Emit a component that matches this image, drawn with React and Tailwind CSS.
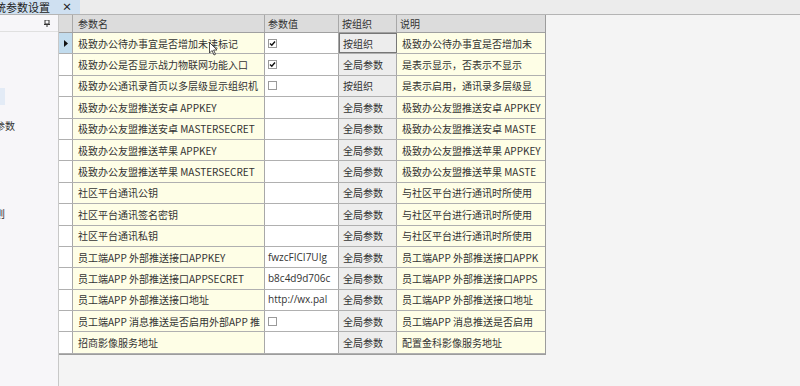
import React from "react";

const rows = [
  { name: "极致办公待办事宜是否增加未读标记", value: "check", org: "按组织", desc: "极致办公待办事宜是否增加未" },
  { name: "极致办公是否显示战力物联网功能入口", value: "check", org: "全局参数", desc: "是表示显示，否表示不显示" },
  { name: "极致办公通讯录首页以多层级显示组织机", value: "box", org: "按组织", desc: "是表示启用，通讯录多层级显" },
  { name: "极致办公友盟推送安卓 APPKEY", value: "", org: "全局参数", desc: "极致办公友盟推送安卓 APPKEY" },
  { name: "极致办公友盟推送安卓 MASTERSECRET", value: "", org: "全局参数", desc: "极致办公友盟推送安卓 MASTE" },
  { name: "极致办公友盟推送苹果 APPKEY", value: "", org: "全局参数", desc: "极致办公友盟推送苹果 APPKEY" },
  { name: "极致办公友盟推送苹果 MASTERSECRET", value: "", org: "全局参数", desc: "极致办公友盟推送苹果 MASTE" },
  { name: "社区平台通讯公钥", value: "", org: "全局参数", desc: "与社区平台进行通讯时所使用" },
  { name: "社区平台通讯签名密钥", value: "", org: "全局参数", desc: "与社区平台进行通讯时所使用" },
  { name: "社区平台通讯私钥", value: "", org: "全局参数", desc: "与社区平台进行通讯时所使用" },
  { name: "员工端APP 外部推送接口APPKEY", value: "fwzcFICI7UIg", org: "全局参数", desc: "员工端APP 外部推送接口APPK" },
  { name: "员工端APP 外部推送接口APPSECRET", value: "b8c4d9d706c", org: "全局参数", desc: "员工端APP 外部推送接口APPS" },
  { name: "员工端APP 外部推送接口地址", value: "http://wx.pal", org: "全局参数", desc: "员工端APP 外部推送接口地址" },
  { name: "员工端APP 消息推送是否启用外部APP 推", value: "box", org: "全局参数", desc: "员工端APP 消息推送是否启用" },
  { name: "招商影像服务地址", value: "", org: "全局参数", desc: "配置金科影像服务地址" },
];

const font = { fontFamily: '"Noto Sans CJK SC", "Liberation Sans", sans-serif' };

function Check({ checked }) {
  return (
    <span className="inline-flex h-[9px] w-[9px] items-center justify-center border border-[#9a9a9a] bg-white">
      {checked && (
        <svg width="7" height="7" viewBox="0 0 7 7">
          <path d="M1 3.5 L2.8 5.3 L6 1.5" stroke="#111" strokeWidth="1.4" fill="none" />
        </svg>
      )}
    </span>
  );
}

export default function App() {
  return (
    <div className="w-[800px] h-[386px] overflow-hidden bg-[#f4f4f4] text-[#333] relative" style={font}>
      {/* tab strip */}
      <div className="flex h-[15px] bg-[#ececec] border-b border-[#b4b4b4]">
        <div className="flex w-[80px] h-[14px] items-center bg-[#cfe0f1] text-[11px] leading-none text-[#222]">
          <span className="ml-[-5px]">统参数设置</span>
          <span className="ml-[12px] text-[10px] font-bold leading-none">×</span>
        </div>
      </div>

      <div className="flex h-[371px]">
        {/* left docked panel */}
        <div className="w-[59px] bg-[#f7f6f9] border-r border-[#c8c8c8] text-[10px] text-[#333]">
          <div className="flex h-[17px] items-center justify-end pr-[8px] border-b border-[#e0e0e0]">
            <svg width="6" height="7" viewBox="0 0 6 7">
              <rect x="1" y="0" width="4" height="4" fill="none" stroke="#333" strokeWidth="1" />
              <path d="M0 4.5 H6 M3 4.5 V7" stroke="#333" strokeWidth="1" />
            </svg>
          </div>
          <div className="mt-[56px] h-[17px] w-[5px] bg-[#e3ebf6]" />
          <div className="mt-[16px] ml-[-5px] leading-none">参数</div>
          <div className="mt-[78px] ml-[-5px] leading-none">则</div>
        </div>

        {/* grid */}
        <div className="flex-1">
          <div className="w-[487px] border-r border-b border-[#9c9c9c] text-[10px]">
            <div className="flex h-[18px] bg-[#dcdcdc] border-b border-[#a0a0a0]">
              <div className="w-[14px] border-r border-[#a8a8a8]" />
              <div className="w-[192px] border-r border-[#a8a8a8] pl-[5px] flex items-center">参数名</div>
              <div className="w-[74px] border-r border-[#a8a8a8] pl-[3px] flex items-center">参数值</div>
              <div className="w-[58px] border-r border-[#a8a8a8] pl-[3px] flex items-center">按组织</div>
              <div className="flex-1 pl-[3px] flex items-center">说明</div>
            </div>
            {rows.map((r, i) => (
              <div key={i} className="flex h-[21.4px] border-b border-[#b0b0b0]">
                <div className={`w-[14px] border-r border-[#a8a8a8] flex items-center justify-center ${i === 0 ? "bg-[#c2dcee]" : "bg-white"}`}>
                  {i === 0 && (
                    <svg width="4" height="7" viewBox="0 0 4 7">
                      <path d="M0 0 L4 3.5 L0 7 Z" fill="#111" />
                    </svg>
                  )}
                </div>
                <div className="w-[192px] border-r border-[#a8a8a8] bg-[#fefee6] pl-[5px] flex items-center whitespace-nowrap overflow-hidden">
                  {r.name}
                </div>
                <div className="w-[74px] border-r border-[#a8a8a8] bg-white pl-[3px] flex items-center whitespace-nowrap overflow-hidden" style={{ fontFamily: '"Open Sans", "Noto Sans CJK SC", sans-serif' }}>
                  {r.value === "check" && <Check checked />}
                  {r.value === "box" && <Check checked={false} />}
                  {r.value !== "check" && r.value !== "box" && r.value}
                </div>
                <div className={`w-[58px] border-r border-[#a8a8a8] bg-[#ededed] pl-[4px] flex items-center whitespace-nowrap ${i === 0 ? "outline outline-1 outline-[#777] -outline-offset-1" : ""}`}>
                  {r.org}
                </div>
                <div className="flex-1 bg-[#fefee6] pl-[5px] flex items-center whitespace-nowrap overflow-hidden">
                  {r.desc}
                </div>
              </div>
            ))}
          </div>
        </div>
      </div>

      {/* mouse pointer */}
      <svg className="absolute left-[209px] top-[42px]" width="9" height="14" viewBox="0 0 9 14">
        <path d="M0.5 0.5 L0.5 11 L3 8.5 L5 13 L6.5 12.3 L4.6 8 L8 8 Z" fill="#fff" stroke="#222" strokeWidth="0.8" />
      </svg>
    </div>
  );
}
